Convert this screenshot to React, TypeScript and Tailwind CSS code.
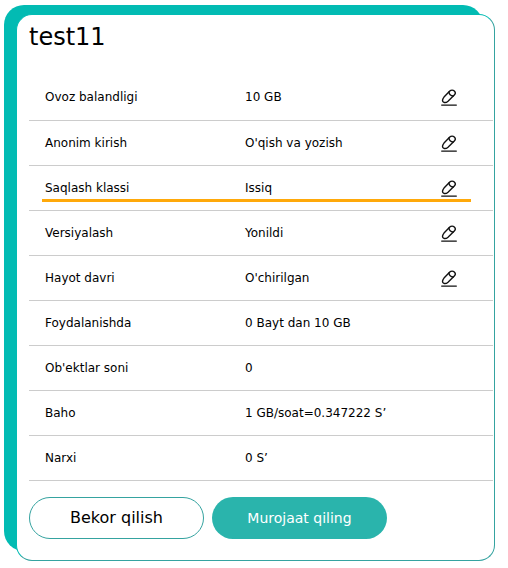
// src/components/BucketSettings.tsx
import React from 'react';

interface Row {
  label: string;
  value: string;
  editable?: boolean;
  active?: boolean;
}

const rows: Row[] = [
  { label: 'Ovoz balandligi', value: '10 GB', editable: true },
  { label: 'Anonim kirish', value: "O'qish va yozish", editable: true },
  { label: 'Saqlash klassi', value: 'Issiq', editable: true, active: true },
  { label: 'Versiyalash', value: 'Yonildi', editable: true },
  { label: 'Hayot davri', value: "O'chirilgan", editable: true },
  { label: 'Foydalanishda', value: '0 Bayt dan 10 GB' },
  { label: "Ob'ektlar soni", value: '0' },
  { label: 'Baho', value: '1 GB/soat=0.347222 S’' },
  { label: 'Narxi', value: '0 S’' },
];

function EditIcon() {
  return (
    <svg width="16" height="18" viewBox="0 0 16 18" fill="none" stroke="#111" strokeWidth="1.4" strokeLinecap="round" strokeLinejoin="round">
      <path d="M8.8 3 C10 1.8 12.1 1.8 13.3 3 C14.5 4.2 14.4 6 13.3 7.1 L7 13.2 C5.8 14.3 4.2 14.8 2.9 14.4 C1.8 14.1 1.4 12.9 1.6 11.8 C1.8 10.8 2.2 10 3 9.1 Z" />
      <path d="M8 4 C7.9 6.2 9.8 8.1 12.2 8" />
      <path d="M0.7 17.1 H15.3" />
    </svg>
  );
}

export default function App() {
  return (
    <main className="bg-white pt-[5px] pl-1 pr-[13px] pb-[7px] font-['DejaVu_Sans',sans-serif] text-black">
      <div className="relative pt-[9px] pl-3">
        {/* Teal plate behind the card */}
        <div className="absolute top-0 left-0 right-3 bottom-[10px] rounded-[20px] bg-[#02bbb3]"></div>

        <section className="relative rounded-[16px] border border-[#35a3a0] border-t-[#02bbb3] border-l-[#02bbb3] bg-white pt-[6px] pl-3 pr-px pb-[21px]">
          <h1 className="text-2xl leading-8">test11</h1>

          <table className="mt-[22px] w-full table-fixed border-collapse text-xs">
            <tbody>
              {rows.map((row) => (
                <tr key={row.label} className="relative h-[45px] border-b border-[#cccccc]">
                  <th scope="row" className="w-[200px] p-0 pl-4 text-left font-normal">{row.label}</th>
                  <td className="p-0 pl-4">{row.value}</td>
                  <td className="w-[52px] p-0">
                    {row.editable && (
                      <button type="button" aria-label={row.label} className="block cursor-pointer">
                        <EditIcon />
                      </button>
                    )}
                    {row.active && (
                      <span className="absolute left-[13px] right-[22px] bottom-[7px] h-[3px] bg-[#ffa90a]"></span>
                    )}
                  </td>
                </tr>
              ))}
            </tbody>
          </table>

          <div className="mt-4 flex gap-2">
            <button type="button" className="h-[42px] w-[175px] cursor-pointer rounded-full border border-[#35a3a0] bg-white text-base">
              Bekor qilish
            </button>
            <button type="button" className="h-[42px] w-[175px] cursor-pointer rounded-full bg-[#2ab4ac] text-sm text-white">
              Murojaat qiling
            </button>
          </div>
        </section>
      </div>
    </main>
  );
}
